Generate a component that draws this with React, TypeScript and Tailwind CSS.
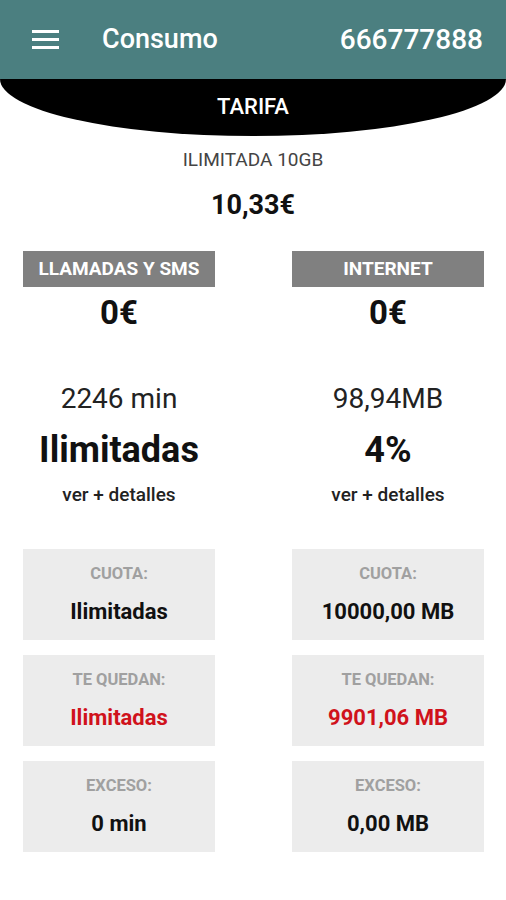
import React from 'react';

const ROWS = [
  { label: 'CUOTA:', left: 'Ilimitadas', right: '10000,00 MB', red: false },
  { label: 'TE QUEDAN:', left: 'Ilimitadas', right: '9901,06 MB', red: true },
  { label: 'EXCESO:', left: '0 min', right: '0,00 MB', red: false },
];

// --- Main Page Component ---
export default function App() {
  return (
    <div className="w-[506px] min-h-[900px] bg-white font-['Roboto',sans-serif]">
      {/* 1. App bar */}
      <header className="h-[79px] bg-[#4b7f80] flex items-center pl-[32px] pr-[23px] text-white">
        <div className="flex flex-col gap-[5px] w-[27px]">
          <span className="h-[3px] bg-white" />
          <span className="h-[3px] bg-white" />
          <span className="h-[3px] bg-white" />
        </div>
        <h1 className="ml-[43px] text-[27px] leading-none font-medium">Consumo</h1>
        <span className="ml-auto text-[28px] leading-none font-medium">666777888</span>
      </header>

      {/* 2. Tarifa band */}
      <div className="h-[57px] bg-black rounded-b-[50%_100%] flex justify-center pt-[15px]">
        <span className="text-white text-[22px] leading-[26px] font-medium">TARIFA</span>
      </div>

      <div className="text-center mt-[13px] text-[19px] leading-[22px] text-[#444]">ILIMITADA 10GB</div>
      <div className="text-center mt-[18px] text-[27px] leading-[32px] font-bold text-[#111]">10,33€</div>

      {/* 3. Columns */}
      <div className="grid grid-cols-2 gap-x-[77px] pl-[23px] pr-[22px] mt-[30px]">
        <UsageColumn title="LLAMADAS Y SMS" used="2246 min" value="Ilimitadas" />
        <UsageColumn title="INTERNET" used="98,94MB" value="4%" />
      </div>

      <div className="grid grid-cols-2 gap-x-[77px] gap-y-[15px] pl-[23px] pr-[22px] mt-[42px]">
        {ROWS.map(row => (
          <React.Fragment key={row.label}>
            <InfoBox label={row.label} value={row.left} red={row.red} />
            <InfoBox label={row.label} value={row.right} red={row.red} />
          </React.Fragment>
        ))}
      </div>
    </div>
  );
}

const UsageColumn = ({ title, used, value }: { title: string; used: string; value: string }) => (
  <div className="flex flex-col items-center">
    <div className="w-full h-[36px] bg-[#808080] flex items-center justify-center text-white font-bold text-[19px]">
      {title}
    </div>
    <div className="mt-[7px] text-[33px] leading-[38px] font-bold text-[#111]">0€</div>
    <div className="mt-[51px] text-[28px] leading-[32px] text-[#222]">{used}</div>
    <div className="mt-[14px] text-[36px] leading-[42px] font-bold text-[#111]">{value}</div>
    <div className="mt-[12px] text-[19px] leading-[24px] font-medium text-[#222]">ver + detalles</div>
  </div>
);

const InfoBox = ({ label, value, red }: { label: string; value: string; red: boolean }) => (
  <div className="h-[91px] bg-[#ececec] flex flex-col items-center pt-[15px]">
    <div className="text-[16.5px] leading-[20px] font-bold text-[#a0a0a0]">{label}</div>
    <div className={`mt-[15px] text-[22px] leading-[26px] font-bold ${red ? 'text-[#d0121b]' : 'text-[#111]'}`}>
      {value}
    </div>
  </div>
);
